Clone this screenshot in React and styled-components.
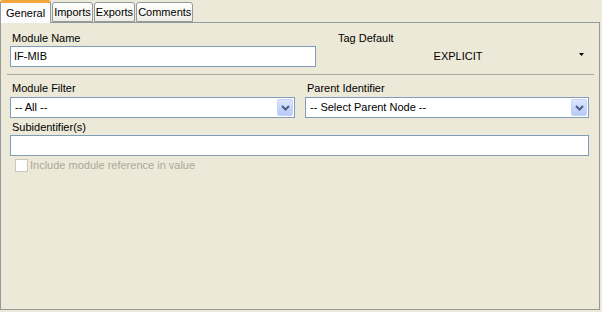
import styled, { createGlobalStyle } from "styled-components";

const Global = createGlobalStyle`
html, body {
  margin: 0;
  padding: 0;
  background: #ece9d8;
}
* { box-sizing: border-box; }
`

const Frame = styled.div`
width: 602px;
height: 312px;
background: #ece9d8;
font-family: "Liberation Sans", Arial, sans-serif;
font-size: 11px;
color: #000;
overflow: hidden;
`

const TabStrip = styled.div`
display: flex;
align-items: flex-end;
height: 23px;
position: relative;
z-index: 1;
`

const Tab = styled.div`
height: ${p => p.$active ? '23px' : '20px'};
margin: ${p => p.$active ? '0' : '0 0 1px 1px'};
padding: ${p => p.$active ? '3px 5px 0' : '2px 1px 0'};
line-height: 15px;
border: 1px solid #919b9c;
border-bottom: ${p => p.$active ? 'none' : '1px solid #919b9c'};
border-top: ${p => p.$active ? '3px solid #f2a63a' : '1px solid #919b9c'};
border-radius: 3px 3px 0 0;
background: ${p => p.$active ? '#fcfcfe' : 'linear-gradient(#fefefe, #f4f3ee 70%, #ecebe6)'};
white-space: nowrap;
`

const Panel = styled.div`
width: 600px;
height: 288px;
margin-top: -1px;
border: 1px solid #919b9c;
background: #ece9d8;
padding: 9px 10px 0 9px;
`

const TopRow = styled.div`
display: flex;
gap: 20px;
`

const Field = styled.div`
display: flex;
flex-direction: column;
width: ${p => p.$w || 'auto'};
flex: ${p => p.$w ? 'none' : '1'};
`

const Label = styled.div`
height: 13px;
line-height: 13px;
padding-left: 2px;
margin-bottom: ${p => p.$gap || 1}px;
white-space: nowrap;
`

const TextBox = styled.div`
height: 21px;
border: 1px solid #7f9db9;
background: #fff;
padding: 0 3px;
line-height: 19px;
`

const PlainCombo = styled.div`
height: 21px;
display: flex;
align-items: center;
padding-right: 4px;
`

const PlainValue = styled.div`
flex: 1;
text-align: center;
line-height: 19px;
padding-left: 2px;
`

const Separator = styled.div`
height: 1px;
background: #aca899;
margin: 7px -5px 7px -3px;
`

const Grid = styled.div`
display: grid;
grid-template-columns: 285px 1fr;
column-gap: 10px;
`

const Combo = styled.div`
height: 21px;
border: 1px solid #7f9db9;
background: #fff;
display: flex;
padding: 1px;
`

const ComboText = styled.div`
flex: 1;
line-height: 17px;
padding-left: 3px;
`

const ComboButton = styled.div`
width: 16px;
height: 17px;
border: 1px solid #c3d3fd;
border-radius: 2px;
background: linear-gradient(#dce7fd, #c6d6fb 55%, #b6caf5);
display: flex;
align-items: center;
justify-content: center;
`

const Section = styled.div`
margin-top: 3px;
`

const CheckRow = styled.div`
display: flex;
align-items: center;
gap: 2px;
margin: 3px 0 0 5px;
color: #aca899;
height: 13px;
line-height: 13px;
`

const CheckBox = styled.div`
width: 13px;
height: 13px;
border: 1px solid #cac8bb;
background: #fff;
`

const Chevron = () => (
    <svg width="9" height="6" viewBox="0 0 9 6">
        <path d="M1 1 L4.5 4.5 L8 1" fill="none" stroke="#4d6185" strokeWidth="2" />
    </svg>
)

const SmallArrow = () => (
    <svg width="7" height="4" viewBox="0 0 7 4" style={{ marginTop: -3 }}>
        <polygon points="1,0 6,0 3.5,3" fill="#000" />
    </svg>
)

const App = () => {
    const tabs = ['General', 'Imports', 'Exports', 'Comments'];

    return (
        <Frame>
            <Global />
            <TabStrip>
                {tabs.map((t, i) => (
                    <Tab key={t} $active={i === 0}>{t}</Tab>
                ))}
            </TabStrip>
            <Panel>
                <TopRow>
                    <Field $w="306px">
                        <Label>Module Name</Label>
                        <TextBox>IF-MIB</TextBox>
                    </Field>
                    <Field>
                        <Label>Tag Default</Label>
                        <PlainCombo>
                            <PlainValue>EXPLICIT</PlainValue>
                            <SmallArrow />
                        </PlainCombo>
                    </Field>
                </TopRow>
                <Separator />
                <Grid>
                    <Field>
                        <Label $gap={2}>Module Filter</Label>
                        <Combo>
                            <ComboText>-- All --</ComboText>
                            <ComboButton><Chevron /></ComboButton>
                        </Combo>
                    </Field>
                    <Field>
                        <Label $gap={2}>Parent Identifier</Label>
                        <Combo>
                            <ComboText>-- Select Parent Node --</ComboText>
                            <ComboButton><Chevron /></ComboButton>
                        </Combo>
                    </Field>
                </Grid>
                <Section>
                    <Label>Subidentifier(s)</Label>
                    <TextBox />
                </Section>
                <CheckRow>
                    <CheckBox />
                    Include module reference in value
                </CheckRow>
            </Panel>
        </Frame>
    )
}

export default App
